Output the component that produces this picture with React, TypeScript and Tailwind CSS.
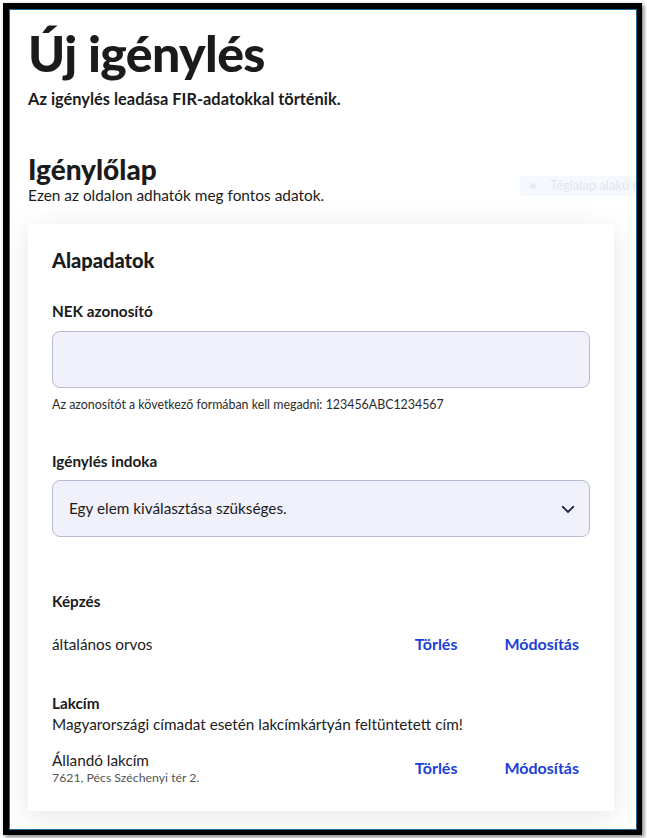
import React from 'react'

const heading = "font-['Lato',sans-serif]"

function ActionLinks() {
  return (
    <div className="flex items-center gap-[47px] pr-[11px] text-[16px] font-bold text-[#1a3fd6]">
      <button className="font-bold">Törlés</button>
      <button className="font-bold">Módosítás</button>
    </div>
  )
}

export default function App() {
  return (
    <div className="relative w-[647px] h-[838px] bg-white overflow-hidden font-['Lato',sans-serif] text-[#1b1b1b]">
      <div className="ml-[3px] mt-[3px] w-[639px] h-[832px] border-[6px] border-r-[5px] border-b-[5px] border-black shadow-[2px_2px_4px_rgba(0,0,0,0.5)]">
        <div className="relative h-full border border-[#1d6c9a] bg-white overflow-hidden pl-[18px] pr-[22px]">
          <h1 className={`${heading} mt-[13px] text-[50px] font-black leading-[60px] tracking-[-0.6px]`}>Új igénylés</h1>
          <p className={`${heading} mt-[6px] text-[16.4px] font-bold leading-5`}>Az igénylés leadása FIR-adatokkal történik.</p>

          <h2 className={`${heading} mt-[44px] text-[28px] font-black leading-8`}>Igénylőlap</h2>
          <p className={`${heading} text-[15.4px] leading-5`}>Ezen az oldalon adhatók meg fontos adatok.</p>

          <div className="absolute left-[510px] top-[166px] flex h-[20px] w-[140px] items-center gap-[14px] bg-[#f5f8fd] pl-[10px] text-[13px] text-[#e2e6ee]">
            <span className="h-[6px] w-[6px] rounded-full bg-[#e8edf4]" />
            <span className="whitespace-nowrap">Téglalap alakú m</span>
          </div>

          <div className="mt-[19px] bg-white px-[24px] pt-[22px] pb-[25px] shadow-[0_6px_28px_rgba(0,0,0,0.1)]">
            <h3 className={`${heading} text-[20px] font-black leading-7`}>Alapadatok</h3>

            <label className="mt-[27px] block text-[15.3px] font-bold leading-5">NEK azonosító</label>
            <div className="mt-[10px] h-[57px] rounded-[8px] border border-[#b9bbd3] bg-[#f1f1fb]" />
            <p className="mt-[9px] text-[12.4px] leading-4 text-[#2b2b2b]">Az azonosítót a következő formában kell megadni: 123456ABC1234567</p>

            <label className="mt-[38px] block text-[15.3px] font-bold leading-5">Igénylés indoka</label>
            <div className="mt-[9px] flex h-[57px] items-center justify-between rounded-[8px] border border-[#b9bbd3] bg-[#f1f1fb] pl-[16px] pr-[12px]">
              <span className="text-[15.3px]">Egy elem kiválasztása szükséges.</span>
              <svg width="18" height="18" viewBox="0 0 24 24" fill="none" stroke="#1f2a44" strokeWidth="2.4" strokeLinecap="round" strokeLinejoin="round">
                <path d="M5 9l7 7 7-7" />
              </svg>
            </div>

            <p className="mt-[54px] text-[15.3px] font-bold leading-5">Képzés</p>
            <div className="mt-[21px] flex items-center justify-between">
              <span className="text-[15.3px] leading-5">általános orvos</span>
              <ActionLinks />
            </div>

            <p className="mt-[37px] text-[15.3px] font-bold leading-5">Lakcím</p>
            <p className="mt-[1px] text-[15.3px] leading-5">Magyarországi címadat esetén lakcímkártyán feltüntetett cím!</p>
            <div className="mt-[16px] flex items-center justify-between">
              <div className="flex flex-col">
                <span className="text-[15.3px] leading-5">Állandó lakcím</span>
                <span className="text-[12.3px] leading-4 text-[#555]">7621, Pécs Széchenyi tér 2.</span>
              </div>
              <ActionLinks />
            </div>
          </div>
        </div>
      </div>
    </div>
  )
}
